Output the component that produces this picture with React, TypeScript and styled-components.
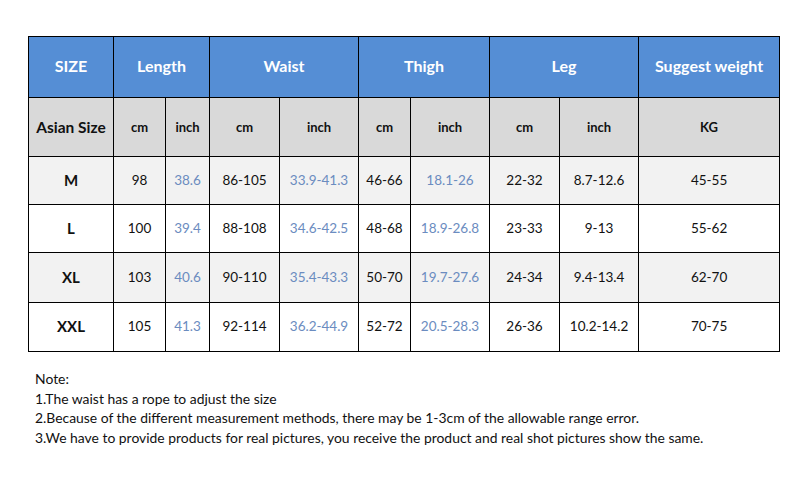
import React from "react";
import styled, { createGlobalStyle } from "styled-components";

const Global = createGlobalStyle`
  html, body { margin: 0; padding: 0; background: #fff; }
  body { font-family: Lato, "Open Sans", sans-serif; color: #111; }
`;

const Page = styled.div`
  width: 805px;
  height: 477px;
  padding: 36px 0 0 28px;
  box-sizing: border-box;
`;

const Table = styled.table`
  border-collapse: collapse;
  table-layout: fixed;
  width: 751px;
  text-align: center;
  & td, & th {
    border: 1.5px solid #000;
    padding: 0;
  }
`;

const HeadRow = styled.tr`
  height: 61px;
  background: #558ed5;
  & th {
    color: #fff;
    font-size: 16px;
    font-weight: 700;
    padding-bottom: 3px;
  }
`;

const SubRow = styled.tr`
  height: 59px;
  background: #d9d9d9;
  & th {
    font-size: 13px;
    font-weight: 700;
    color: #111;
    padding-bottom: 1px;
  }
`;

const SubLabel = styled.th`
  && { font-size: 15.5px; }
`;

const DataRow = styled.tr<{ $shade: boolean; $h: number }>`
  height: ${(p) => p.$h}px;
  background: ${(p) => (p.$shade ? "#f2f2f2" : "#ffffff")};
  & td {
    font-size: 13.5px;
    color: #111;
    padding-bottom: 2px;
  }
`;

const SizeCell = styled.td`
  && { font-size: 15px; font-weight: 700; }
`;

const InchCell = styled.td`
  && { color: #6b8cc0; }
`;

const Notes = styled.div`
  margin-top: 17px;
  padding-left: 7px;
  font-size: 13.9px;
  line-height: 19.6px;
  color: #111;
`;

const widths = [85, 52, 44, 70, 79, 52, 79, 70, 79, 141];

const rows = [
  { s: "M", h: 48, v: ["98", "38.6", "86-105", "33.9-41.3", "46-66", "18.1-26", "22-32", "8.7-12.6", "45-55"] },
  { s: "L", h: 48, v: ["100", "39.4", "88-108", "34.6-42.5", "48-68", "18.9-26.8", "23-33", "9-13", "55-62"] },
  { s: "XL", h: 50, v: ["103", "40.6", "90-110", "35.4-43.3", "50-70", "19.7-27.6", "24-34", "9.4-13.4", "62-70"] },
  { s: "XXL", h: 49, v: ["105", "41.3", "92-114", "36.2-44.9", "52-72", "20.5-28.3", "26-36", "10.2-14.2", "70-75"] },
];

const blueIdx = new Set([1, 3, 5]);

export default function App() {
  return (
    <>
      <Global />
      <Page>
        <Table>
          <colgroup>
            {widths.map((w, i) => (
              <col key={i} style={{ width: w }} />
            ))}
          </colgroup>
          <thead>
            <HeadRow>
              <th>SIZE</th>
              <th colSpan={2}>Length</th>
              <th colSpan={2}>Waist</th>
              <th colSpan={2}>Thigh</th>
              <th colSpan={2}>Leg</th>
              <th>Suggest weight</th>
            </HeadRow>
            <SubRow>
              <SubLabel>Asian Size</SubLabel>
              <th>cm</th>
              <th>inch</th>
              <th>cm</th>
              <th>inch</th>
              <th>cm</th>
              <th>inch</th>
              <th>cm</th>
              <th>inch</th>
              <th>KG</th>
            </SubRow>
          </thead>
          <tbody>
            {rows.map((r, ri) => (
              <DataRow key={r.s} $shade={ri % 2 === 0} $h={r.h}>
                <SizeCell>{r.s}</SizeCell>
                {r.v.map((v, i) =>
                  blueIdx.has(i) ? <InchCell key={i}>{v}</InchCell> : <td key={i}>{v}</td>
                )}
              </DataRow>
            ))}
          </tbody>
        </Table>
        <Notes>
          <div>Note:</div>
          <div>1.The waist has a rope to adjust the size</div>
          <div>2.Because of the different measurement methods, there may be 1-3cm of the allowable range error.</div>
          <div>3.We have to provide products for real pictures, you receive the product and real shot pictures show the same.</div>
        </Notes>
      </Page>
    </>
  );
}
